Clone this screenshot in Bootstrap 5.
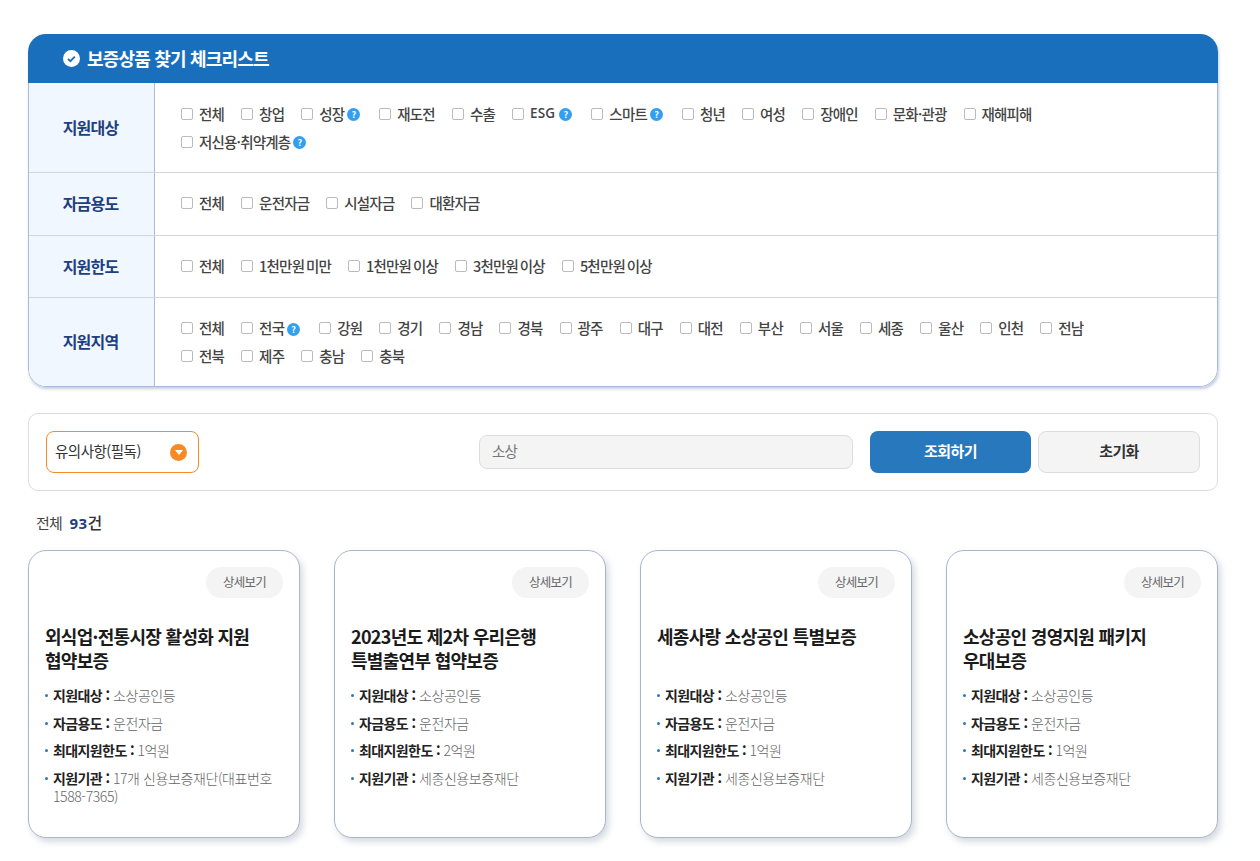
<!DOCTYPE html>
<html lang="ko"><head><meta charset="utf-8"><title>보증상품 찾기</title>
<link href="https://cdn.jsdelivr.net/npm/bootstrap@5.3.0/dist/css/bootstrap.min.css" rel="stylesheet">
<style>
html,body{overflow:hidden;height:861px;background:#fff}
body{font-family:"Noto Sans CJK KR","Noto Sans",sans-serif;color:#333;letter-spacing:-.8px}
.latin{font-family:"Open Sans","Noto Sans CJK KR",sans-serif;letter-spacing:0}
.page-wrap{margin:34px 42px 0 28px}
.check-box{border-radius:18px;overflow:hidden;box-shadow:1px 2px 3px rgba(60,90,150,.3)}
.check-head{height:49px;background:#1a6fbd;color:#fff;font-size:18px;font-weight:700;padding:0 0 0 35px;gap:7px}
.check-body{border:1px solid #a9bbdc;border-top:0;border-radius:0 0 18px 18px;overflow:hidden}
.check-row{border-top:1px solid #d5d5d5}
.check-row:first-child{border-top:0}
.row-a{height:89px}.row-b{height:63px}.row-c{height:62px}
.row-th{width:126px;flex:none;background:#f0f7fe;border-right:1px solid #a9bbdc;color:#1f3f80;font-size:16px;font-weight:700;padding:0 2px 2px 0}
.row-td{padding:0 90px 2px 26px;column-gap:17px;align-content:center}
.row-a .row-td{padding-bottom:0}
.opt{height:28px;gap:6px;font-size:14.5px;color:#444;font-weight:500;margin:0;word-spacing:-1.5px}
.opt .form-check-input{width:12px;height:12px;margin:0;border:1px solid #bbb;border-radius:2px;flex:none}
.q-mark{width:13px;height:13px;border-radius:50%;background:#339ff0;color:#fff;font-size:9px;font-weight:700;margin:2px 2px 0 -3px;letter-spacing:0;line-height:1}
.esg{font-size:13.5px;font-weight:600;letter-spacing:.2px;margin:0 1px 0 0}
.search-bar{height:78px;margin-top:26px;border:1px solid #ddd;border-radius:10px;padding:0 17px}
.notice-sel{width:153px;height:42px;border:1px solid #f58b26;border-radius:8px;padding:0 11px 0 8px;font-size:14.5px;color:#333;letter-spacing:-.5px}
.notice-sel>span:first-child{padding-bottom:2px}
.notice-dot{width:17px;height:17px;border-radius:50%;background:#f58b26}
.kw-input{width:374px;height:34px;background:#f4f4f4;border:1px solid #ddd;border-radius:8px;margin-left:280px;font-size:14.5px;color:#777;padding:0 12px;line-height:30px}
.act-btn{width:161px;height:42px;border-radius:8px;font-size:15px;font-weight:700;padding:0 0 2px;letter-spacing:-.6px}
.btn-find{background:#2878bd;color:#fff;margin-left:17px;margin-right:7px;border:0}
.btn-clear{background:#f4f4f4;color:#333;border:1px solid #ddd;width:162px}
.total-line{margin:20px 0 16px 8px;font-size:15px;line-height:22px;color:#444}
.total-line b{color:#1f3f80;font-weight:700;margin-left:4px;letter-spacing:.5px}
.total-line span{color:#333;font-weight:500;font-size:16px;letter-spacing:0}
.goods-grid{display:grid;grid-template-columns:repeat(4,272px);column-gap:34px}
.goods{height:288px;border:1px solid #a9b5c9;border-radius:18px;padding:16px 16px 0;box-shadow:3px 4px 6px rgba(90,110,140,.25);background:#fff}
.more-pill{width:77px;height:31px;background:#f4f4f4;border-radius:16px;font-size:12.5px;color:#666;margin-left:auto;line-height:30px;text-align:center}
.goods h3{font-size:18px;line-height:24px;height:48px;margin:26px 0 14px;font-weight:700;color:#1b1b1b;letter-spacing:-.7px;word-break:keep-all}
.goods ul{list-style:none;margin:0;padding:0}
.goods li{position:relative;padding-left:8px;font-size:14px;line-height:18px;margin-bottom:9.67px;color:#666;font-weight:300;letter-spacing:-.4px}
.goods li::before{content:"";position:absolute;left:0;top:8px;width:3px;height:3px;border-radius:50%;background:#2878bd}
.goods li b{color:#222;font-weight:700;letter-spacing:-.6px}
</style></head><body>
<div class="page-wrap">
<section class="check-box">
<div class="check-head d-flex align-items-center">
<svg width="17" height="17" viewBox="0 0 17 17"><circle cx="8.5" cy="8.5" r="8.5" fill="#fff"/><path d="M5 8.8l2.4 2.4 4.4-4.6" fill="none" stroke="#1a6fbd" stroke-width="1.8"/></svg>
<span>보증상품 찾기 체크리스트</span></div>
<div class="check-body">
<div class="check-row row-a d-flex">
<div class="row-th d-flex align-items-center justify-content-center">지원대상</div>
<div class="row-td d-flex flex-wrap flex-grow-1">
<label class="opt d-inline-flex align-items-center"><input class="form-check-input" type="checkbox">전체</label>
<label class="opt d-inline-flex align-items-center"><input class="form-check-input" type="checkbox">창업</label>
<label class="opt d-inline-flex align-items-center"><input class="form-check-input" type="checkbox">성장<i class="q-mark d-inline-flex align-items-center justify-content-center fst-normal">?</i></label>
<label class="opt d-inline-flex align-items-center"><input class="form-check-input" type="checkbox">재도전</label>
<label class="opt d-inline-flex align-items-center"><input class="form-check-input" type="checkbox">수출</label>
<label class="opt d-inline-flex align-items-center"><input class="form-check-input" type="checkbox"><span class="latin esg">ESG</span><i class="q-mark d-inline-flex align-items-center justify-content-center fst-normal">?</i></label>
<label class="opt d-inline-flex align-items-center"><input class="form-check-input" type="checkbox">스마트<i class="q-mark d-inline-flex align-items-center justify-content-center fst-normal">?</i></label>
<label class="opt d-inline-flex align-items-center"><input class="form-check-input" type="checkbox">청년</label>
<label class="opt d-inline-flex align-items-center"><input class="form-check-input" type="checkbox">여성</label>
<label class="opt d-inline-flex align-items-center"><input class="form-check-input" type="checkbox">장애인</label>
<label class="opt d-inline-flex align-items-center"><input class="form-check-input" type="checkbox">문화·관광</label>
<label class="opt d-inline-flex align-items-center"><input class="form-check-input" type="checkbox">재해피해</label>
<label class="opt d-inline-flex align-items-center"><input class="form-check-input" type="checkbox">저신용·취약계층<i class="q-mark d-inline-flex align-items-center justify-content-center fst-normal">?</i></label>
</div></div>

<div class="check-row row-b d-flex">
<div class="row-th d-flex align-items-center justify-content-center">자금용도</div>
<div class="row-td d-flex flex-wrap flex-grow-1">
<label class="opt d-inline-flex align-items-center"><input class="form-check-input" type="checkbox">전체</label>
<label class="opt d-inline-flex align-items-center"><input class="form-check-input" type="checkbox">운전자금</label>
<label class="opt d-inline-flex align-items-center"><input class="form-check-input" type="checkbox">시설자금</label>
<label class="opt d-inline-flex align-items-center"><input class="form-check-input" type="checkbox">대환자금</label>
</div></div>

<div class="check-row row-c d-flex">
<div class="row-th d-flex align-items-center justify-content-center">지원한도</div>
<div class="row-td d-flex flex-wrap flex-grow-1">
<label class="opt d-inline-flex align-items-center"><input class="form-check-input" type="checkbox">전체</label>
<label class="opt d-inline-flex align-items-center"><input class="form-check-input" type="checkbox">1천만원 미만</label>
<label class="opt d-inline-flex align-items-center"><input class="form-check-input" type="checkbox">1천만원 이상</label>
<label class="opt d-inline-flex align-items-center"><input class="form-check-input" type="checkbox">3천만원 이상</label>
<label class="opt d-inline-flex align-items-center"><input class="form-check-input" type="checkbox">5천만원 이상</label>
</div></div>

<div class="check-row row-a d-flex">
<div class="row-th d-flex align-items-center justify-content-center">지원지역</div>
<div class="row-td d-flex flex-wrap flex-grow-1">
<label class="opt d-inline-flex align-items-center"><input class="form-check-input" type="checkbox">전체</label>
<label class="opt d-inline-flex align-items-center"><input class="form-check-input" type="checkbox">전국<i class="q-mark d-inline-flex align-items-center justify-content-center fst-normal">?</i></label>
<label class="opt d-inline-flex align-items-center"><input class="form-check-input" type="checkbox">강원</label>
<label class="opt d-inline-flex align-items-center"><input class="form-check-input" type="checkbox">경기</label>
<label class="opt d-inline-flex align-items-center"><input class="form-check-input" type="checkbox">경남</label>
<label class="opt d-inline-flex align-items-center"><input class="form-check-input" type="checkbox">경북</label>
<label class="opt d-inline-flex align-items-center"><input class="form-check-input" type="checkbox">광주</label>
<label class="opt d-inline-flex align-items-center"><input class="form-check-input" type="checkbox">대구</label>
<label class="opt d-inline-flex align-items-center"><input class="form-check-input" type="checkbox">대전</label>
<label class="opt d-inline-flex align-items-center"><input class="form-check-input" type="checkbox">부산</label>
<label class="opt d-inline-flex align-items-center"><input class="form-check-input" type="checkbox">서울</label>
<label class="opt d-inline-flex align-items-center"><input class="form-check-input" type="checkbox">세종</label>
<label class="opt d-inline-flex align-items-center"><input class="form-check-input" type="checkbox">울산</label>
<label class="opt d-inline-flex align-items-center"><input class="form-check-input" type="checkbox">인천</label>
<label class="opt d-inline-flex align-items-center"><input class="form-check-input" type="checkbox">전남</label>
<label class="opt d-inline-flex align-items-center"><input class="form-check-input" type="checkbox">전북</label>
<label class="opt d-inline-flex align-items-center"><input class="form-check-input" type="checkbox">제주</label>
<label class="opt d-inline-flex align-items-center"><input class="form-check-input" type="checkbox">충남</label>
<label class="opt d-inline-flex align-items-center"><input class="form-check-input" type="checkbox">충북</label>
</div></div>
</div>
</section>

<section class="search-bar d-flex align-items-center">
<div class="notice-sel d-flex align-items-center justify-content-between"><span>유의사항(필독)</span>
<span class="notice-dot d-flex align-items-center justify-content-center"><svg width="8" height="5" viewBox="0 0 8 5"><path d="M0 0h8L4 5z" fill="#fff"/></svg></span></div>
<div class="kw-input">소상</div>
<button class="btn act-btn btn-find" type="button">조회하기</button>
<button class="btn act-btn btn-clear" type="button">초기화</button>
</section>

<div class="total-line">전체 <b class="latin">93</b><span>건</span></div>

<section class="goods-grid">
<article class="goods"><div class="more-pill">상세보기</div>
<h3>외식업·전통시장 활성화 지원 협약보증</h3>
<ul><li><b>지원대상 :</b> 소상공인등</li><li><b>자금용도 :</b> 운전자금</li><li><b>최대지원한도 :</b> 1억원</li><li><b>지원기관 :</b> 17개 신용보증재단(대표번호 1588-7365)</li></ul></article>
<article class="goods"><div class="more-pill">상세보기</div>
<h3>2023년도 제2차 우리은행 특별출연부 협약보증</h3>
<ul><li><b>지원대상 :</b> 소상공인등</li><li><b>자금용도 :</b> 운전자금</li><li><b>최대지원한도 :</b> 2억원</li><li><b>지원기관 :</b> 세종신용보증재단</li></ul></article>
<article class="goods"><div class="more-pill">상세보기</div>
<h3>세종사랑 소상공인 특별보증</h3>
<ul><li><b>지원대상 :</b> 소상공인등</li><li><b>자금용도 :</b> 운전자금</li><li><b>최대지원한도 :</b> 1억원</li><li><b>지원기관 :</b> 세종신용보증재단</li></ul></article>
<article class="goods"><div class="more-pill">상세보기</div>
<h3>소상공인 경영지원 패키지 우대보증</h3>
<ul><li><b>지원대상 :</b> 소상공인등</li><li><b>자금용도 :</b> 운전자금</li><li><b>최대지원한도 :</b> 1억원</li><li><b>지원기관 :</b> 세종신용보증재단</li></ul></article>
</section>
</div>
<script src="https://cdn.jsdelivr.net/npm/bootstrap@5.3.0/dist/js/bootstrap.bundle.min.js"></script>
</body></html>
